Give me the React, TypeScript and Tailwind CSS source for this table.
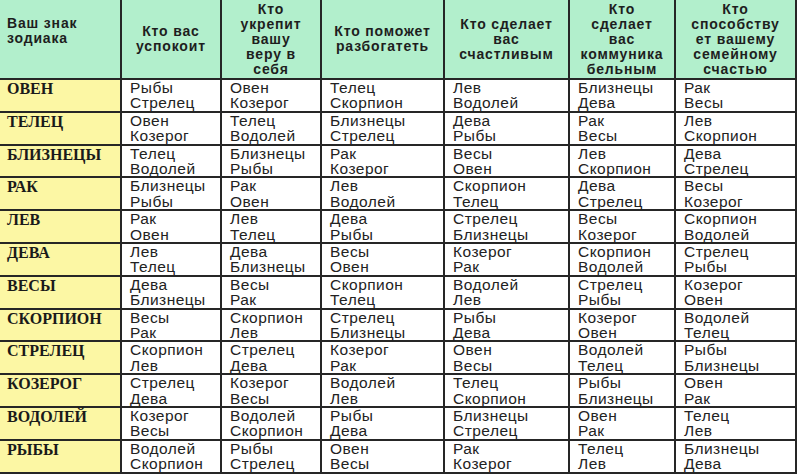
const headers: string[][] = [
  ["Кто вас", "успокоит"],
  ["Кто", "укрепит", "вашу", "веру в", "себя"],
  ["Кто поможет", "разбогатеть"],
  ["Кто сделает", "вас", "счастливым"],
  ["Кто", "сделает", "вас", "коммуника", "бельным"],
  ["Кто", "способству", "ет вашему", "семейному", "счастью"],
];

const rows: [string, string[]][] = [
  ["ОВЕН", ["Рыбы/Стрелец", "Овен/Козерог", "Телец/Скорпион", "Лев/Водолей", "Близнецы/Дева", "Рак/Весы"]],
  ["ТЕЛЕЦ", ["Овен/Козерог", "Телец/Водолей", "Близнецы/Стрелец", "Дева/Рыбы", "Рак/Весы", "Лев/Скорпион"]],
  ["БЛИЗНЕЦЫ", ["Телец/Водолей", "Близнецы/Рыбы", "Рак/Козерог", "Весы/Овен", "Лев/Скорпион", "Дева/Стрелец"]],
  ["РАК", ["Близнецы/Рыбы", "Рак/Овен", "Лев/Водолей", "Скорпион/Телец", "Дева/Стрелец", "Весы/Козерог"]],
  ["ЛЕВ", ["Рак/Овен", "Лев/Телец", "Дева/Рыбы", "Стрелец/Близнецы", "Весы/Козерог", "Скорпион/Водолей"]],
  ["ДЕВА", ["Лев/Телец", "Дева/Близнецы", "Весы/Овен", "Козерог/Рак", "Скорпион/Водолей", "Стрелец/Рыбы"]],
  ["ВЕСЫ", ["Дева/Близнецы", "Весы/Рак", "Скорпион/Телец", "Водолей/Лев", "Стрелец/Рыбы", "Козерог/Овен"]],
  ["СКОРПИОН", ["Весы/Рак", "Скорпион/Лев", "Стрелец/Близнецы", "Рыбы/Дева", "Козерог/Овен", "Водолей/Телец"]],
  ["СТРЕЛЕЦ", ["Скорпион/Лев", "Стрелец/Дева", "Козерог/Рак", "Овен/Весы", "Водолей/Телец", "Рыбы/Близнецы"]],
  ["КОЗЕРОГ", ["Стрелец/Дева", "Козерог/Весы", "Водолей/Лев", "Телец/Скорпион", "Рыбы/Близнецы", "Овен/Рак"]],
  ["ВОДОЛЕЙ", ["Козерог/Весы", "Водолей/Скорпион", "Рыбы/Дева", "Близнецы/Стрелец", "Овен/Рак", "Телец/Лев"]],
  ["РЫБЫ", ["Водолей/Скорпион", "Рыбы/Стрелец", "Овен/Весы", "Рак/Козерог", "Телец/Лев", "Близнецы/Дева"]],
];

export default function App() {
  return (
    <div className="w-[797px] h-[475px] overflow-hidden bg-white">
      <div className="grid grid-cols-[122px_100px_100px_123px_125px_106px_121px] grid-rows-[80px_repeat(12,32.8px)]">
        {/* header */}
        <div className="bg-[#b2efcc] border-r-2 border-b-2 border-[#262626] pl-[7px] pt-[16px] flex flex-col font-['Liberation_Sans',Arial,sans-serif] font-bold text-[14px] leading-[15px] tracking-[0.06em] text-[#1e1e1e]">
          <span>Ваш знак</span>
          <span>зодиака</span>
        </div>
        {headers.map((lines, i) => (
          <div
            key={i}
            className="bg-[#b2efcc] border-r-2 border-b-2 border-[#262626] flex flex-col items-center justify-center text-center font-['Liberation_Sans',Arial,sans-serif] font-bold text-[14px] leading-[15px] tracking-[0.06em] text-[#1e1e1e] whitespace-nowrap"
          >
            {lines.map((l) => (
              <span key={l}>{l}</span>
            ))}
          </div>
        ))}

        {/* body */}
        {rows.map(([sign, cells]) => (
          <div key={sign} className="contents">
            <div className="bg-[#fcf7a4] border-r-2 border-b-2 border-[#262626] pl-[7px] pt-[1px] font-['Liberation_Serif','Times_New_Roman',serif] font-bold text-[16px] leading-[16px] text-[#1a1a1a]">
              {sign}
            </div>
            {cells.map((c, j) => {
              const [a, b] = c.split("/");
              return (
                <div
                  key={j}
                  className="bg-white border-r-2 border-b-2 border-[#262626] pl-[8px] flex flex-col font-['Liberation_Sans',Arial,sans-serif] text-[15.5px] leading-[15.4px] tracking-[0.03em] text-[#222] whitespace-nowrap"
                >
                  <span>{a}</span>
                  <span>{b}</span>
                </div>
              );
            })}
          </div>
        ))}
      </div>
    </div>
  );
}
